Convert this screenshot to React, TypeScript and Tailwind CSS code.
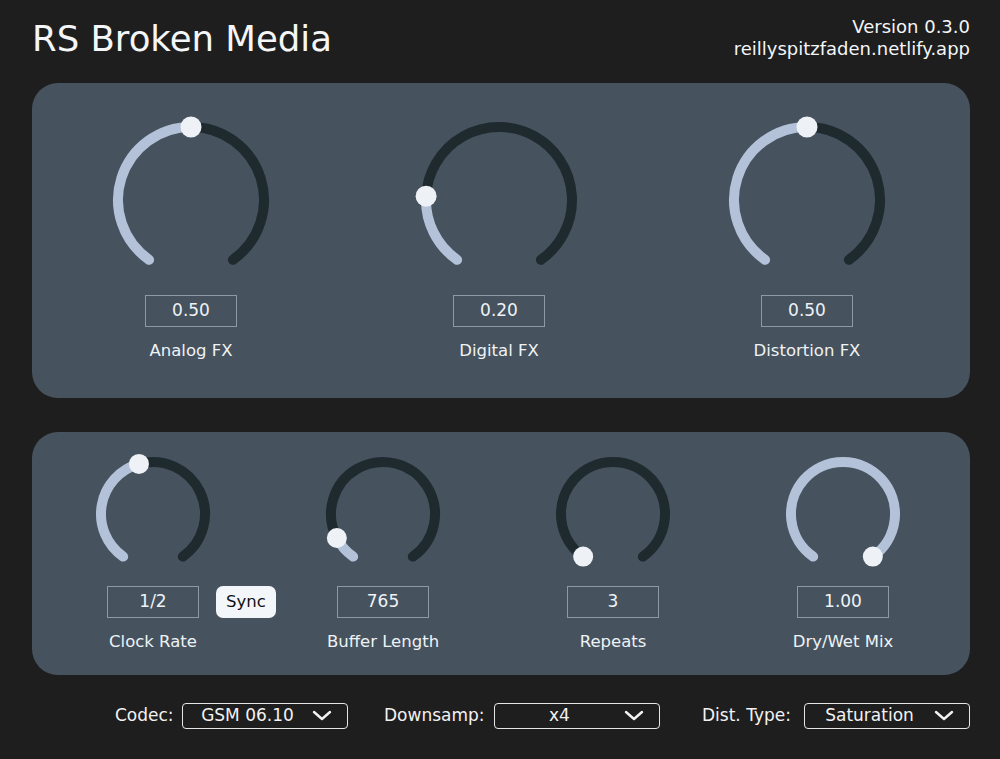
import React from "react";

const FONT = { fontFamily: '"DejaVu Sans", Verdana, sans-serif' };

const START = -145;
const END = 145;

function polar(c: number, r: number, deg: number) {
  const a = (deg * Math.PI) / 180;
  return [c + r * Math.sin(a), c - r * Math.cos(a)];
}

function arc(c: number, r: number, from: number, to: number) {
  const [x1, y1] = polar(c, r, from);
  const [x2, y2] = polar(c, r, to);
  const large = to - from > 180 ? 1 : 0;
  return `M ${x1} ${y1} A ${r} ${r} 0 ${large} 1 ${x2} ${y2}`;
}

interface KnobProps {
  value: number;
  size: number;
  radius: number;
  stroke: number;
  thumb: number;
}

const Knob: React.FC<KnobProps> = ({ value, size, radius, stroke, thumb }) => {
  const c = size / 2;
  const angle = START + (END - START) * value;
  const [tx, ty] = polar(c, radius, angle);
  return (
    <svg width={size} height={size} viewBox={`0 0 ${size} ${size}`}>
      {angle < END - 0.5 && (
        <path d={arc(c, radius, angle, END)} fill="none" stroke="#1f2a2f" strokeWidth={stroke} strokeLinecap="round" />
      )}
      {angle > START + 0.5 && (
        <path d={arc(c, radius, START, angle)} fill="none" stroke="#b3c2d8" strokeWidth={stroke} strokeLinecap="round" />
      )}
      <circle cx={tx} cy={ty} r={thumb} fill="#eef2f7" />
    </svg>
  );
};

const ValueBox: React.FC<{ text: string }> = ({ text }) => (
  <div className="w-[92px] h-[32px] border border-[#8f99a3] flex items-center justify-center text-[17px] text-[#eef2f6]">
    {text}
  </div>
);

const Chevron = () => (
  <svg width="20" height="12" viewBox="0 0 20 12">
    <path d="M2 2 L10 9 L18 2" fill="none" stroke="#f2f2f2" strokeWidth="2.4" strokeLinecap="round" strokeLinejoin="round" />
  </svg>
);

const Select: React.FC<{ label: string; value: string; labelW: string }> = ({ label, value, labelW }) => (
  <div className="flex items-center">
    <span className={`${labelW} text-[17px] text-[#f2f2f2]`}>{label}</span>
    <div className="w-[166px] h-[26px] border border-[#e6e6e6] rounded-[4px] flex items-center pr-[15px] text-[17px] text-[#f2f2f2]">
      <span className="flex-1 text-center">{value}</span>
      <Chevron />
    </div>
  </div>
);

export default function App() {
  return (
    <div className="w-[1000px] h-[759px] bg-[#1e1e1e] pl-[32px] pr-[30px] overflow-hidden" style={FONT}>
      <div className="h-[83px] flex justify-between">
        <h1 className="text-[35.5px] text-[#f4f6f8] pt-[17px] leading-[44px]">RS Broken Media</h1>
        <div className="text-right text-[18px] leading-[22px] text-[#f4f6f8] pt-[16px]">
          <div>Version 0.3.0</div>
          <div>reillyspitzfaden.netlify.app</div>
        </div>
      </div>

      <div className="h-[315px] rounded-[26px] bg-[#46525e] grid grid-cols-[repeat(3,308px)] px-[5px] pt-[32px]">
        {[
          { v: 0.5, t: "0.50", l: "Analog FX" },
          { v: 0.2, t: "0.20", l: "Digital FX" },
          { v: 0.5, t: "0.50", l: "Distortion FX" },
        ].map((k) => (
          <div key={k.l} className="flex flex-col items-center">
            <Knob value={k.v} size={170} radius={73} stroke={10} thumb={10.5} />
            <div className="mt-[10px]">
              <ValueBox text={k.t} />
            </div>
            <div className="mt-[12px] text-[16.5px] leading-[24px] text-[#eef2f6]">{k.l}</div>
          </div>
        ))}
      </div>

      <div className="mt-[34px] h-[243px] rounded-[26px] bg-[#46525e] grid grid-cols-[repeat(4,230px)] px-[6px] pt-[17px]">
        {[
          { v: 0.446, t: "1/2", l: "Clock Rate", sync: true },
          { v: 0.095, t: "765", l: "Buffer Length" },
          { v: 0, t: "3", l: "Repeats" },
          { v: 1, t: "1.00", l: "Dry/Wet Mix" },
        ].map((k) => (
          <div key={k.l} className="flex flex-col items-center">
            <Knob value={k.v} size={130} radius={52} stroke={10} thumb={10} />
            <div className="mt-[7px] relative">
              <ValueBox text={k.t} />
              {k.sync && (
                <div className="absolute left-full top-0 ml-[17px] w-[60px] h-[32px] bg-[#f4f7fa] rounded-[7px] flex items-center justify-center text-[16.5px] text-[#111]">
                  Sync
                </div>
              )}
            </div>
            <div className="mt-[12px] text-[16.5px] leading-[24px] text-[#eef2f6]">{k.l}</div>
          </div>
        ))}
      </div>

      <div className="mt-[28px] flex justify-end">
        <Select label="Codec:" value="GSM 06.10" labelW="w-[67px]" />
        <div className="ml-[36px]">
          <Select label="Downsamp:" value="x4" labelW="w-[110px]" />
        </div>
        <div className="ml-[42px]">
          <Select label="Dist. Type:" value="Saturation" labelW="w-[102px]" />
        </div>
      </div>
    </div>
  );
}
